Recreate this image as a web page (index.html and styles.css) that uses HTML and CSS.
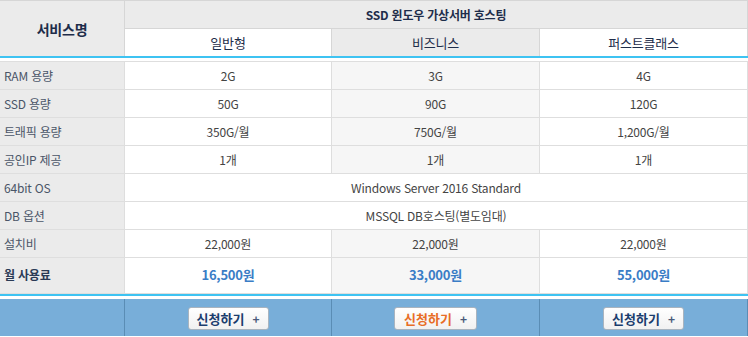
FILE: index.html
```html
<!DOCTYPE html>
<html lang="ko">
<head>
<meta charset="utf-8">
<link rel="stylesheet" href="styles.css">
</head>
<body>
<div class="plan">
  <div class="head">
    <div class="cell label-head">서비스명</div>
    <div class="cell title">SSD 윈도우 가상서버 호스팅</div>
    <div class="cell tier">일반형</div>
    <div class="cell tier alt">비즈니스</div>
    <div class="cell tier">퍼스트클래스</div>
  </div>
  <div class="rule"></div>
  <div class="body">
    <div class="cell label">RAM 용량</div>
    <div class="cell">2G</div><div class="cell alt">3G</div><div class="cell">4G</div>
    <div class="cell label">SSD 용량</div>
    <div class="cell">50G</div><div class="cell alt">90G</div><div class="cell">120G</div>
    <div class="cell label">트래픽 용량</div>
    <div class="cell">350G/월</div><div class="cell alt">750G/월</div><div class="cell">1,200G/월</div>
    <div class="cell label">공인IP 제공</div>
    <div class="cell">1개</div><div class="cell alt">1개</div><div class="cell">1개</div>
    <div class="cell label">64bit OS</div>
    <div class="cell span">Windows Server 2016 Standard</div>
    <div class="cell label">DB 옵션</div>
    <div class="cell span">MSSQL DB호스팅(별도임대)</div>
    <div class="cell label">설치비</div>
    <div class="cell">22,000원</div><div class="cell alt">22,000원</div><div class="cell">22,000원</div>
    <div class="cell label strong">월 사용료</div>
    <div class="cell price">16,500원</div><div class="cell alt price">33,000원</div><div class="cell price">55,000원</div>
  </div>
  <div class="rule"></div>
  <div class="foot">
    <div class="fcell"></div>
    <div class="fcell"><a class="btn">신청하기<span class="plus">+</span></a></div>
    <div class="fcell"><a class="btn hot">신청하기<span class="plus">+</span></a></div>
    <div class="fcell"><a class="btn">신청하기<span class="plus">+</span></a></div>
  </div>
</div>
</body>
</html>
```
FILE: styles.css
```css
html, body { margin: 0; padding: 0; background: #fff; }
body {
  font-family: "Noto Sans CJK KR", "Noto Sans", sans-serif;
  font-size: 12px;
  color: #444;
}
.plan { width: 748px; }
.head, .body, .foot {
  display: grid;
  grid-template-columns: 124px 206px 207px 207px;
  gap: 1px;
  padding-right: 1px;
}
.head {
  background: #d6d6d6;
  padding-top: 1px;
  grid-template-rows: 27px 27px;
}
.cell {
  background: #fff;
  display: flex;
  align-items: center;
  justify-content: center;
  letter-spacing: -0.2px;
}
.label-head {
  grid-row: 1 / 3;
  background: #ebebeb;
  font-weight: bold;
  color: #1e2d4a;
  font-size: 14px;
}
.title {
  grid-column: 2 / 5;
  background: #ebebeb;
  font-weight: bold;
  color: #1e2d4a;
}
.tier { color: #1e2d4a; font-size: 13px; }
.tier.alt { background: #ebebeb; }
.rule {
  height: 2px;
  background: #3ec3f2;
  border-bottom: 3px solid #fff;
}
.body {
  background: #dedede;
  padding-top: 1px;
  padding-bottom: 1px;
  grid-template-rows: repeat(7, 27px) 35px;
}
.body .alt { background: #f6f6f6; }
.label {
  background: #ebebeb;
  justify-content: flex-start;
  padding-left: 4px;
  color: #4a5568;
}
.label.strong { font-weight: bold; color: #2a3a55; padding-bottom: 3px; }
.span { grid-column: 2 / 5; }
.price { color: #3a7dc6; font-weight: bold; font-size: 13px; padding-bottom: 3px; }
.foot {
  background: #5a8db5;
  grid-template-rows: 37px;
}
.fcell {
  background: #78aed9;
  display: flex;
  align-items: center;
  justify-content: center;
}
.btn {
  display: flex;
  align-items: center;
  justify-content: center;
  gap: 8px;
  width: 79px;
  height: 21px;
  border: 1px solid #a9b4bf;
  border-radius: 3px;
  background: linear-gradient(#ffffff, #f1f1f1);
  font-weight: bold;
  font-size: 13px;
  color: #1b3d6e;
  box-sizing: content-box;
  margin-top: 2px;
}
.btn.hot { width: 81px; color: #e86d26; }
.plus { color: #4a5a7a; font-size: 12px; font-weight: bold; }
```
